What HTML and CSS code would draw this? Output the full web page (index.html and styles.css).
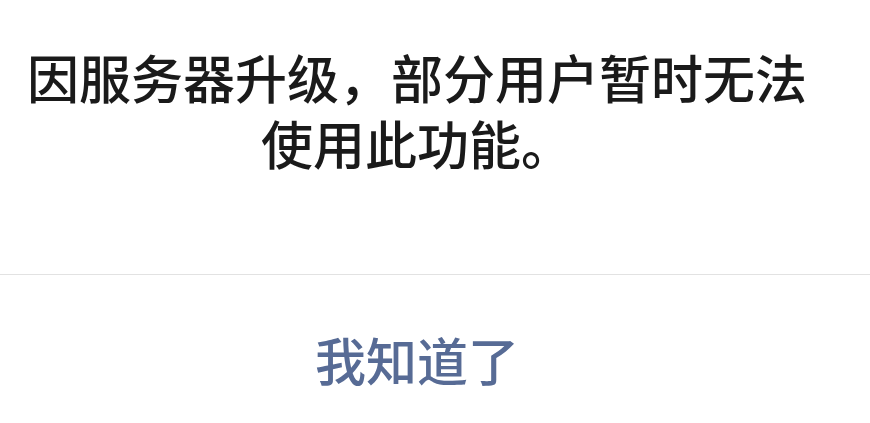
FILE: index.html
```html
<!DOCTYPE html>
<html lang="zh-CN">
<head>
<meta charset="utf-8">
<link rel="stylesheet" href="styles.css">
</head>
<body>
<div class="dialog">
  <div class="dialog-body">
    <p class="message">因服务器升级，部分用户暂时无法使用此功能。</p>
  </div>
  <div class="dialog-footer">
    <button class="dialog-btn" type="button">我知道了</button>
  </div>
</div>
</body>
</html>
```
FILE: styles.css
```css
html, body {
  margin: 0;
  padding: 0;
  background: #ffffff;
}
body {
  font-family: "Noto Sans CJK SC", "Noto Sans", sans-serif;
}
.dialog {
  width: 870px;
  background: #ffffff;
}
.dialog-body {
  padding: 44px 44px 0 8px;
  height: 274px;
  box-sizing: border-box;
}
.message {
  margin: 0;
  font-size: 52px;
  line-height: 66px;
  font-weight: 500;
  color: #1a1a1a;
  text-align: center;
}
.dialog-footer {
  border-top: 1px solid #e2e2e2;
  display: flex;
}
.dialog-btn {
  flex: 1;
  height: 168px;
  border: 0;
  background: transparent;
  padding: 0 36px 0 0;
  font-family: inherit;
  font-size: 51px;
  font-weight: 500;
  color: #576b95;
  text-align: center;
}
```
